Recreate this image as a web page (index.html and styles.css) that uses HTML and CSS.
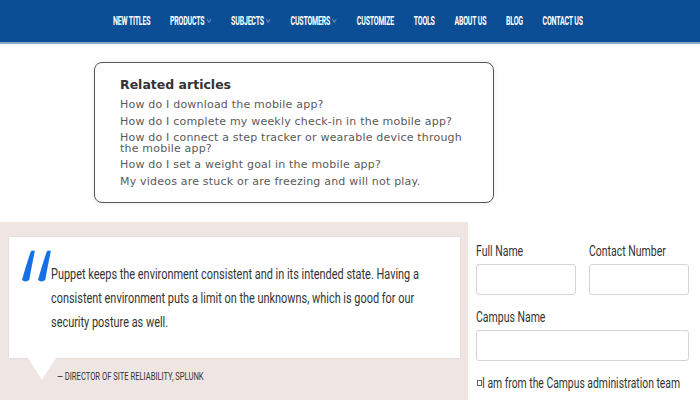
FILE: index.html
```html
<!DOCTYPE html>
<html>
<head>
<meta charset="utf-8">
<link rel="stylesheet" href="styles.css">
</head>
<body>
<header class="nav">
  <ul class="menu">
    <li>NEW TITLES</li>
    <li>PRODUCTS<svg class="chev" width="9" height="6" viewBox="0 0 9 6"><path d="M1 1 L4.5 4.5 L8 1" fill="none" stroke="#6d93c6" stroke-width="1.2"/></svg></li>
    <li>SUBJECTS<svg class="chev" width="9" height="6" viewBox="0 0 9 6"><path d="M1 1 L4.5 4.5 L8 1" fill="none" stroke="#6d93c6" stroke-width="1.2"/></svg></li>
    <li>CUSTOMERS<svg class="chev" width="9" height="6" viewBox="0 0 9 6"><path d="M1 1 L4.5 4.5 L8 1" fill="none" stroke="#6d93c6" stroke-width="1.2"/></svg></li>
    <li>CUSTOMIZE</li>
    <li>TOOLS</li>
    <li>ABOUT US</li>
    <li>BLOG</li>
    <li>CONTACT US</li>
  </ul>
</header>
<section class="top">
  <div class="card">
    <h3 class="card-title">Related articles</h3>
    <ul class="links">
      <li>How do I download the mobile app?</li>
      <li>How do I complete my weekly check-in in the mobile app?</li>
      <li>How do I connect a step tracker or wearable device through the mobile app?</li>
      <li>How do I set a weight goal in the mobile app?</li>
      <li>My videos are stuck or are freezing and will not play.</li>
    </ul>
  </div>
</section>
<section class="bottom">
  <div class="quote-panel">
    <div class="quote-box">
      <svg class="qmark" width="30" height="34" viewBox="0 0 30 34">
        <path d="M9 1 Q10.8 0 12.8 1 Q9.8 16 7.2 30 Q3.5 32.8 0 30 Q4 15 9 1 Z" fill="#1570e6"/>
        <path d="M25 1 Q26.8 0 28.8 1 Q25.8 16 23.2 30 Q19.5 32.8 16 30 Q20 15 25 1 Z" fill="#1570e6"/>
      </svg>
      <p class="quote-text">Puppet keeps the environment consistent and in its intended state. Having a consistent environment puts a limit on the unknowns, which is good for our security posture as well.</p>
    </div>
    <p class="attrib">— DIRECTOR OF SITE RELIABILITY, SPLUNK</p>
  </div>
  <form class="form">
    <div class="row">
      <label class="field">
        <span class="label">Full Name</span>
        <span class="input"></span>
      </label>
      <label class="field">
        <span class="label">Contact Number</span>
        <span class="input"></span>
      </label>
    </div>
    <label class="field wide">
      <span class="label">Campus Name</span>
      <span class="input"></span>
    </label>
    <div class="check"><span class="box"></span><span class="check-text">I am from the Campus administration team</span></div>
  </form>
</section>
</body>
</html>
```
FILE: styles.css
```css
* { box-sizing: border-box; }
html, body { margin: 0; padding: 0; }
body {
  width: 700px;
  height: 400px;
  overflow: hidden;
  background: #fff;
  font-family: "Liberation Sans", Arial, sans-serif;
}
.nav {
  height: 44px;
  background: #0b4e96;
  border-bottom: 2px solid #8eaac3;
  overflow: hidden;
}
.menu {
  list-style: none;
  margin: 0 0 0 113px;
  padding: 0;
  height: 42px;
  display: flex;
  align-items: center;
  gap: 34px;
  transform: scaleX(0.58);
  transform-origin: left center;
}
.menu li {
  color: #fff;
  font-family: Roboto, "DejaVu Sans", sans-serif;
  font-weight: bold;
  font-size: 12px;
  letter-spacing: -0.3px;
  white-space: nowrap;
  display: flex;
  align-items: center;
}
.chev {
  margin-left: 3px;
}
.top {
  height: 178px;
  padding: 18px 0 0 94px;
}
.card {
  width: 400px;
  height: 141px;
  border: 1px solid #555;
  border-radius: 8px;
  padding: 14px 20px 0 25px;
  box-shadow: 0 0 6px rgba(0,0,0,0.08);
}
.card-title {
  margin: 0 0 8px;
  font-family: "DejaVu Sans", sans-serif;
  font-weight: bold;
  font-size: 12.5px;
  color: #333;
}
.links {
  list-style: none;
  margin: 0;
  padding: 0;
  font-family: "DejaVu Sans", sans-serif;
  font-size: 11px;
  letter-spacing: 0.2px;
  color: #5a5a5a;
  line-height: 10.5px;
}
.links li { margin-bottom: 6px; }
.bottom {
  display: flex;
  height: 178px;
}
.quote-panel {
  width: 468px;
  background: #efe5e3;
  padding: 15px 8px 0 9px;
}
.quote-box {
  position: relative;
  background: #fff;
  height: 121px;
  padding: 25px 0 0 42px;
  box-shadow: 0 0 2px rgba(0,0,0,0.1);
}
.quote-box::after {
  content: "";
  position: absolute;
  left: 19px;
  bottom: -22px;
  border-left: 14px solid transparent;
  border-right: 14px solid transparent;
  border-top: 22px solid #fff;
}
.qmark {
  position: absolute;
  left: 13px;
  top: 13px;
}
.quote-text {
  margin: 0;
  width: 475px;
  font-family: Roboto, sans-serif;
  font-size: 14px;
  line-height: 24px;
  color: #333;
  transform: scaleX(0.78);
  transform-origin: left top;
}
.attrib {
  margin: 13px 0 0 48px;
  font-family: Roboto, sans-serif;
  font-size: 10px;
  color: #333;
  white-space: nowrap;
  transform: scaleX(0.76);
  transform-origin: left center;
}
.form {
  width: 232px;
  padding: 21px 11px 0 8px;
  margin: 0;
  font-family: Roboto, sans-serif;
  color: #333;
}
.row {
  display: flex;
  gap: 13px;
}
.field {
  display: flex;
  flex-direction: column;
  flex: 1;
  min-width: 0;
}
.label {
  display: block;
  font-size: 14px;
  line-height: 16px;
  margin-bottom: 5px;
  white-space: nowrap;
  transform: scaleX(0.75);
  transform-origin: left center;
}
.input {
  display: block;
  height: 31px;
  border: 1px solid #d4d4d4;
  border-radius: 3px;
}
.wide { margin-top: 14px; }
.check {
  margin-top: 14px;
  display: flex;
  align-items: center;
  padding-left: 1px;
}
.box {
  flex: none;
  width: 5px;
  height: 6px;
  border: 1px solid #666;
}
.check-text {
  font-size: 14px;
  white-space: nowrap;
  transform: scaleX(0.74);
  transform-origin: left center;
}
```
